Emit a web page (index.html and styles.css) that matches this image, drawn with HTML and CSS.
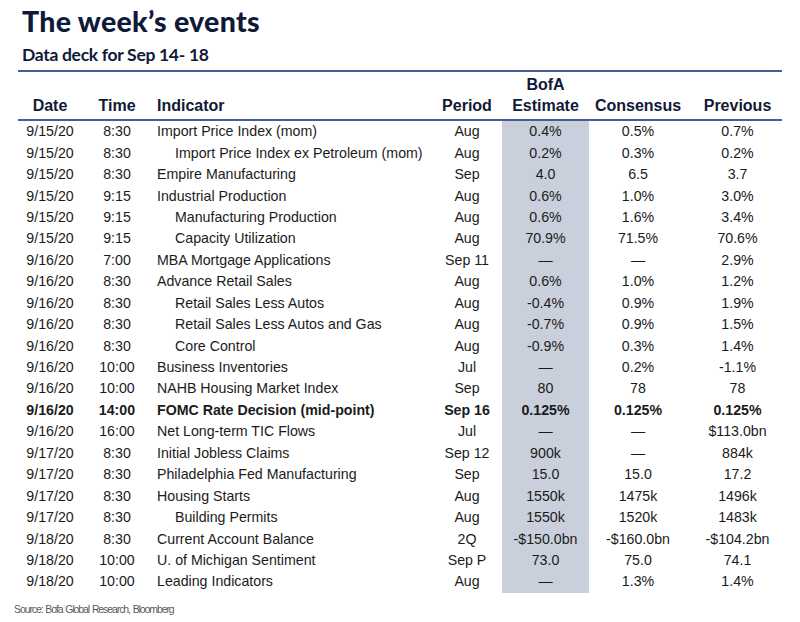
FILE: index.html
```html
<!DOCTYPE html>
<html>
<head>
<meta charset="utf-8">
<link rel="stylesheet" href="styles.css">
</head>
<body>
<div class="page">
  <h1 class="title">The week’s events</h1>
  <h2 class="subtitle">Data deck for Sep 14- 18</h2>
  <div class="rule"></div>
  <table class="deck">
    <colgroup>
      <col class="c-date"><col class="c-time"><col class="c-ind"><col class="c-per"><col class="c-est"><col class="c-con"><col class="c-prev">
    </colgroup>
    <thead>
      <tr>
        <th class="date">Date</th>
        <th class="time">Time</th>
        <th class="ind">Indicator</th>
        <th class="per">Period</th>
        <th class="est">BofA<br>Estimate</th>
        <th class="con">Consensus</th>
        <th class="prev">Previous</th>
      </tr>
    </thead>
    <tbody>
      <tr><td class="date">9/15/20</td><td class="time">8:30</td><td class="ind">Import Price Index (mom)</td><td class="per">Aug</td><td class="est">0.4%</td><td class="con">0.5%</td><td class="prev">0.7%</td></tr>
      <tr><td class="date">9/15/20</td><td class="time">8:30</td><td class="ind sub">Import Price Index ex Petroleum (mom)</td><td class="per">Aug</td><td class="est">0.2%</td><td class="con">0.3%</td><td class="prev">0.2%</td></tr>
      <tr><td class="date">9/15/20</td><td class="time">8:30</td><td class="ind">Empire Manufacturing</td><td class="per">Sep</td><td class="est">4.0</td><td class="con">6.5</td><td class="prev">3.7</td></tr>
      <tr><td class="date">9/15/20</td><td class="time">9:15</td><td class="ind">Industrial Production</td><td class="per">Aug</td><td class="est">0.6%</td><td class="con">1.0%</td><td class="prev">3.0%</td></tr>
      <tr><td class="date">9/15/20</td><td class="time">9:15</td><td class="ind sub">Manufacturing Production</td><td class="per">Aug</td><td class="est">0.6%</td><td class="con">1.6%</td><td class="prev">3.4%</td></tr>
      <tr><td class="date">9/15/20</td><td class="time">9:15</td><td class="ind sub">Capacity Utilization</td><td class="per">Aug</td><td class="est">70.9%</td><td class="con">71.5%</td><td class="prev">70.6%</td></tr>
      <tr><td class="date">9/16/20</td><td class="time">7:00</td><td class="ind">MBA Mortgage Applications</td><td class="per">Sep 11</td><td class="est">—</td><td class="con">—</td><td class="prev">2.9%</td></tr>
      <tr><td class="date">9/16/20</td><td class="time">8:30</td><td class="ind">Advance Retail Sales</td><td class="per">Aug</td><td class="est">0.6%</td><td class="con">1.0%</td><td class="prev">1.2%</td></tr>
      <tr><td class="date">9/16/20</td><td class="time">8:30</td><td class="ind sub">Retail Sales Less Autos</td><td class="per">Aug</td><td class="est">-0.4%</td><td class="con">0.9%</td><td class="prev">1.9%</td></tr>
      <tr><td class="date">9/16/20</td><td class="time">8:30</td><td class="ind sub">Retail Sales Less Autos and Gas</td><td class="per">Aug</td><td class="est">-0.7%</td><td class="con">0.9%</td><td class="prev">1.5%</td></tr>
      <tr><td class="date">9/16/20</td><td class="time">8:30</td><td class="ind sub">Core Control</td><td class="per">Aug</td><td class="est">-0.9%</td><td class="con">0.3%</td><td class="prev">1.4%</td></tr>
      <tr><td class="date">9/16/20</td><td class="time">10:00</td><td class="ind">Business Inventories</td><td class="per">Jul</td><td class="est">—</td><td class="con">0.2%</td><td class="prev">-1.1%</td></tr>
      <tr><td class="date">9/16/20</td><td class="time">10:00</td><td class="ind">NAHB Housing Market Index</td><td class="per">Sep</td><td class="est">80</td><td class="con">78</td><td class="prev">78</td></tr>
      <tr class="bold"><td class="date">9/16/20</td><td class="time">14:00</td><td class="ind">FOMC Rate Decision (mid-point)</td><td class="per">Sep 16</td><td class="est">0.125%</td><td class="con">0.125%</td><td class="prev">0.125%</td></tr>
      <tr><td class="date">9/16/20</td><td class="time">16:00</td><td class="ind">Net Long-term TIC Flows</td><td class="per">Jul</td><td class="est">—</td><td class="con">—</td><td class="prev">$113.0bn</td></tr>
      <tr><td class="date">9/17/20</td><td class="time">8:30</td><td class="ind">Initial Jobless Claims</td><td class="per">Sep 12</td><td class="est">900k</td><td class="con">—</td><td class="prev">884k</td></tr>
      <tr><td class="date">9/17/20</td><td class="time">8:30</td><td class="ind">Philadelphia Fed Manufacturing</td><td class="per">Sep</td><td class="est">15.0</td><td class="con">15.0</td><td class="prev">17.2</td></tr>
      <tr><td class="date">9/17/20</td><td class="time">8:30</td><td class="ind">Housing Starts</td><td class="per">Aug</td><td class="est">1550k</td><td class="con">1475k</td><td class="prev">1496k</td></tr>
      <tr><td class="date">9/17/20</td><td class="time">8:30</td><td class="ind sub">Building Permits</td><td class="per">Aug</td><td class="est">1550k</td><td class="con">1520k</td><td class="prev">1483k</td></tr>
      <tr><td class="date">9/18/20</td><td class="time">8:30</td><td class="ind">Current Account Balance</td><td class="per">2Q</td><td class="est">-$150.0bn</td><td class="con">-$160.0bn</td><td class="prev">-$104.2bn</td></tr>
      <tr><td class="date">9/18/20</td><td class="time">10:00</td><td class="ind">U. of Michigan Sentiment</td><td class="per">Sep P</td><td class="est">73.0</td><td class="con">75.0</td><td class="prev">74.1</td></tr>
      <tr><td class="date">9/18/20</td><td class="time">10:00</td><td class="ind">Leading Indicators</td><td class="per">Aug</td><td class="est">—</td><td class="con">1.3%</td><td class="prev">1.4%</td></tr>
    </tbody>
  </table>
  <p class="source">Source: Bofa Global Research, Bloomberg</p>
</div>
</body>
</html>
```

FILE: styles.css
```css
html, body {
  margin: 0;
  padding: 0;
  background: #ffffff;
}

.page {
  width: 764px;
  padding: 4px 0 0 18px;
}

.title {
  margin: 0 0 0 4px;
  font-family: Lato, "Open Sans", sans-serif;
  font-weight: 900;
  font-size: 28.5px;
  line-height: 34px;
  letter-spacing: 0.3px;
  color: #0f1a38;
}

.subtitle {
  margin: 6px 0 0 4px;
  font-family: Lato, "Open Sans", sans-serif;
  font-weight: 700;
  font-size: 17.5px;
  line-height: 21px;
  letter-spacing: -0.3px;
  color: #0f1a38;
}

.rule {
  margin-top: 5px;
  height: 2px;
  background: #4a5b95;
}

.deck {
  width: 764px;
  table-layout: fixed;
  border-collapse: collapse;
  font-family: "Liberation Sans", Arial, sans-serif;
  font-size: 14.2px;
  color: #1b1b1b;
}

.c-date { width: 64px; }
.c-time { width: 70px; }
.c-ind { width: 285px; }
.c-per { width: 65px; }
.c-est { width: 87px; }
.c-con { width: 98px; }
.c-prev { width: 95px; }

.deck th {
  font-weight: 700;
  font-size: 16px;
  color: #111a36;
  vertical-align: bottom;
  line-height: 21px;
  padding: 2px 0 3px 0;
  border-bottom: 2px solid #4a5b95;
  text-align: center;
  white-space: nowrap;
}

.deck td {
  height: 21.45px;
  padding: 0;
  line-height: 19px;
  text-align: center;
  white-space: nowrap;
}

.deck .ind {
  text-align: left;
  padding-left: 5px;
}

.deck td.sub {
  padding-left: 23px;
}

.deck .per {
  padding-right: 5px;
}

.deck .prev {
  padding-left: 6px;
}

.deck td.est {
  background: #c9d0dc;
}

.deck tr.bold td {
  font-weight: 700;
}

.source {
  margin: 9px 0 0 -4px;
  font-family: "Liberation Sans", Arial, sans-serif;
  font-size: 10.5px;
  line-height: 14px;
  letter-spacing: -1.1px;
  word-spacing: 1px;
  color: #5a5a5a;
}
```
